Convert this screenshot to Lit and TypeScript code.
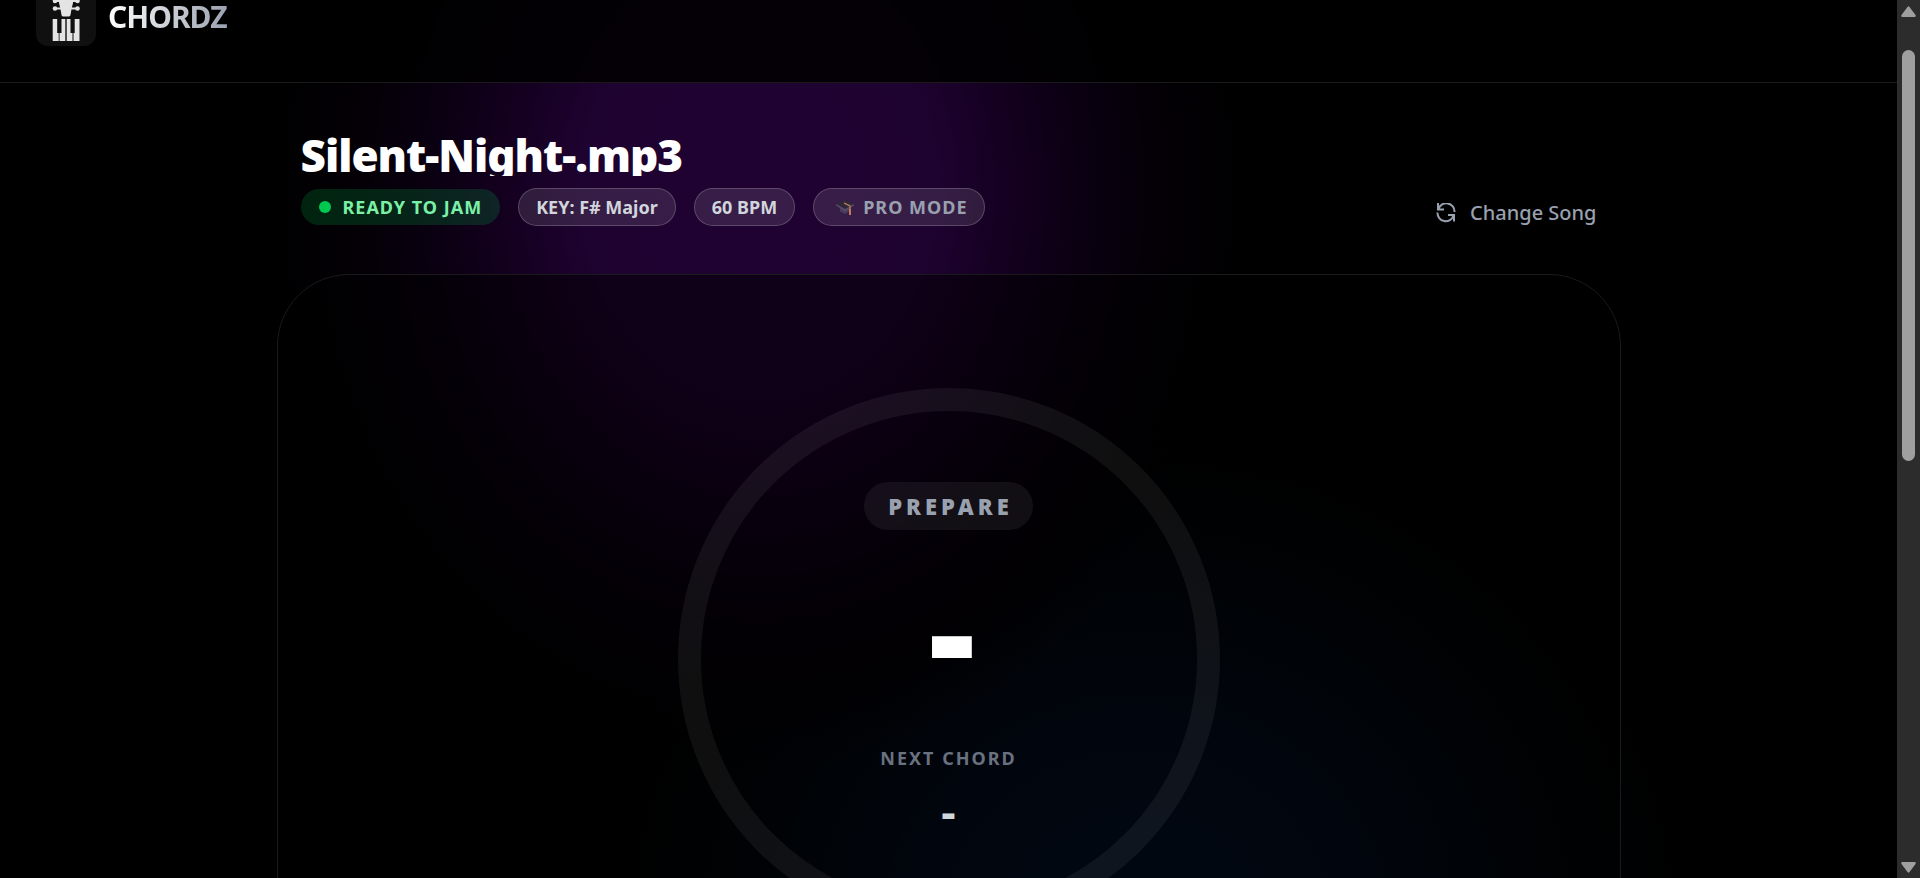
import { LitElement, html, css, svg } from "lit";
import { customElement } from "lit/decorators.js";

const headstock = svg`
  <path d="M13 0h14v17l-1.500 6-1 6q-.3 1.500-2 1.500h-5q-1.700 0-2-1.500l-1-6-1.500-6z" />
  <path d="M8 14h6v2H8z M26 14h6v2h-6z M8 21.500h7v2H8z M25 21.500h7v2h-7z" />
  <circle cx="9" cy="15" r="2.300" /><circle cx="31.500" cy="15" r="2.300" />
  <circle cx="9" cy="22.500" r="2.300" /><circle cx="31.500" cy="22.500" r="2.300" />
`;

const keys = svg`
  <path d="M6.700 33h4.500v14h1.500v8h-6z M15.500 33h3.800v22h-5.800v-8h2z M20.700 33h3.800v14h2v8h-5.800z M28.700 33h4.800v22h-6v-8h1.200z" />
`;

@customElement("app-root")
export class AppRoot extends LitElement {
  static styles = css`
    :host {
      display: flex;
      height: 100vh;
      overflow: hidden;
      background: #000;
      color: #fff;
      font-family: "Noto Sans", "Open Sans", sans-serif;
    }
    * { box-sizing: border-box; margin: 0; }
    button { font: inherit; border: 0; background: none; padding: 0; cursor: pointer; }
    .page {
      flex: 1;
      min-width: 0;
      overflow: hidden;
      background:
        radial-gradient(490px 580px at 40% 190px, #1f0231 0, #1e0230 36%, #14001f 52%, #0a0011 67%, #040006 82%, transparent 100%),
        radial-gradient(540px 500px at 60% 930px, #031024 0, #030c1e 35%, #010710 62%, #000305 84%, transparent 100%);
    }
    .header {
      display: flex;
      align-items: flex-end;
      gap: 12px;
      height: 83px;
      padding: 0 36px 36px;
      background: rgba(0, 0, 0, 0.86);
      border-bottom: 1px solid #1a1a1a;
    }
    .tile {
      flex: none;
      display: grid;
      place-items: center;
      width: 60px;
      height: 60px;
      border-radius: 12px;
      background: #101010;
    }
    .tile svg { display: block; width: 40px; height: 60px; fill: #e4e4e4; }
    .brand {
      font-size: 30px;
      line-height: 34px;
      font-weight: 700;
      letter-spacing: -1px;
      padding: 0 2px 12px 0;
      background: linear-gradient(90deg, #fff, #99a1af);
      background-clip: text;
      -webkit-background-clip: text;
      color: transparent;
    }
    .main { max-width: 1344px; margin: 0 auto; padding-top: 48px; }
    .top {
      display: flex;
      justify-content: space-between;
      align-items: flex-end;
      padding: 0 24px 48px;
    }
    .title {
      padding-top: 4px;
      font-size: 44px;
      line-height: 41px;
      font-weight: 900;
      letter-spacing: -1px;
      overflow: hidden;
      margin-bottom: 12px;
    }
    .pills { display: flex; align-items: center; gap: 18px; }
    .pill {
      display: flex;
      align-items: center;
      height: 38px;
      padding: 0 17px;
      border: 1px solid rgba(255, 255, 255, 0.2);
      border-radius: 19px;
      background: rgba(255, 255, 255, 0.11);
      color: #d1d5dc;
      font-size: 18px;
      line-height: 24px;
      font-weight: 700;
      white-space: nowrap;
    }
    .ready {
      height: 36px;
      padding: 0 18px;
      gap: 12px;
      border: 0;
      background: rgba(0, 201, 80, 0.18);
      color: #7bf1a8;
      letter-spacing: 1px;
    }
    .dot { width: 12px; height: 12px; border-radius: 50%; background: #00c950; }
    .pill.pro { padding: 0 16px 0 22px; gap: 9px; color: #99a1af; letter-spacing: 1px; }
    .pro svg { width: 18px; height: 18px; }
    .change {
      display: flex;
      align-items: center;
      gap: 14px;
      color: #99a1af;
      font-size: 20px;
      line-height: 26px;
      font-weight: 500;
    }
    .change svg { width: 20px; height: 20px; }
    .card {
      display: flex;
      justify-content: center;
      padding: 113px 24px;
      border: 1px solid #1a1a1a;
      border-radius: 72px;
      background: rgba(0, 0, 0, 0.5);
    }
    .ring {
      display: flex;
      flex-direction: column;
      align-items: center;
      flex: none;
      width: 542px;
      height: 542px;
      padding-top: 71px;
      border: 23px solid rgba(255, 255, 255, 0.06);
      border-radius: 50%;
    }
    .state {
      padding: 0 20px 0 24px;
      border-radius: 24px;
      background: rgba(255, 255, 255, 0.06);
      color: #99a1af;
      font-size: 22px;
      line-height: 48px;
      font-weight: 900;
      letter-spacing: 4px;
    }
    .chord {
      margin-top: 28px;
      font-size: 144px;
      line-height: 144px;
      font-weight: 900;
      letter-spacing: -7px;
    }
    .label {
      margin-top: 44px;
      color: #6a7282;
      font-size: 18px;
      line-height: 24px;
      font-weight: 700;
      letter-spacing: 2px;
    }
    .next { margin-top: 14px; color: #d1d5dc; font-size: 45px; line-height: 54px; font-weight: 700; }
    .scroll {
      flex: none;
      display: flex;
      flex-direction: column;
      align-items: center;
      width: 23px;
      padding: 6px 0 5px;
      background: #2c2c2c;
    }
    .scroll svg { width: 15px; height: 11px; fill: #9f9f9f; }
    .track { flex: 1; width: 13px; padding-top: 33px; }
    .thumb { height: 50.6%; border-radius: 7px; background: #9f9f9f; }
  `;

  render() {
    return html`
      <div class="page">
        <header class="header">
          <div class="tile"><svg viewBox="0 0 40 60" aria-hidden="true">${headstock}${keys}</svg></div>
          <span class="brand">CHORDZ</span>
        </header>
        <main class="main">
          <section class="top">
            <div>
              <h1 class="title">Silent-Night-.mp3</h1>
              <div class="pills">
                <span class="pill ready"><i class="dot"></i>READY TO JAM</span>
                <span class="pill">KEY: F# Major</span>
                <span class="pill">60 BPM</span>
                <button class="pill pro">
                  <svg viewBox="0 0 18 18" aria-hidden="true">
                    <path d="M4 8v5.500l5 2.500 5-3V7z" fill="#493c59" />
                    <path d="M0 6l8-4 10 4-9 6z" fill="#30283a" />
                    <path d="M0 6l9 5 9-5v1.500l-9 6-9-6z" fill="#574a6c" />
                    <path d="M8 5l6 3v4" fill="none" stroke="#bd8452" stroke-width="1.300" />
                    <path d="M13 11h2v6h-2z" fill="#c77a60" />
                  </svg>
                  PRO MODE
                </button>
              </div>
            </div>
            <button class="change">
              <svg viewBox="0 0 20 20" fill="none" stroke="currentColor" stroke-width="2" aria-hidden="true">
                <path d="M2 0v6.500h6 M2.500 6A8.200 8.200 0 0 1 18.500 9 M18 18.500V12h-6 M17.500 12.500A8.200 8.200 0 0 1 1.500 9.500" />
              </svg>
              Change Song
            </button>
          </section>
          <section class="card">
            <div class="ring">
              <div class="state">PREPARE</div>
              <div class="chord">-</div>
              <div class="label">NEXT CHORD</div>
              <div class="next">-</div>
            </div>
          </section>
        </main>
      </div>
      <div class="scroll" aria-hidden="true">
        <svg viewBox="0 0 15 11"><path d="M6.500 1q1-1.500 2 0l6 8q.8 2-1 2h-12q-1.800 0-1-2z" /></svg>
        <div class="track"><div class="thumb"></div></div>
        <svg viewBox="0 0 15 11"><path d="M6.500 10q1 1.500 2 0l6-8q.8-2-1-2h-12q-1.800 0-1 2z" /></svg>
      </div>
    `;
  }
}
